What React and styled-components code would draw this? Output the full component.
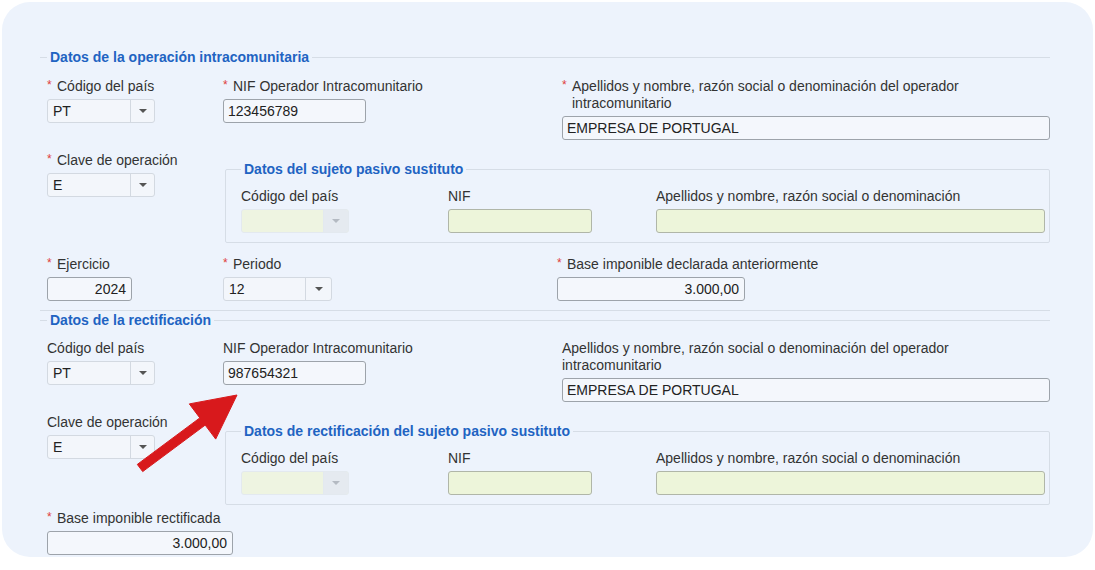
import React from "react";
import styled, { createGlobalStyle } from "styled-components";

const Global = createGlobalStyle`
  html, body { margin: 0; padding: 0; background: #ffffff; }
  body { font-family: "Liberation Sans", Arial, sans-serif; font-size: 14px; color: #333; }
`;

const Card = styled.div`
  position: relative;
  margin: 2px;
  width: 1091px;
  height: 555px;
  box-sizing: border-box;
  background: #edf3fc;
  border-radius: 28px;
  overflow: hidden;
  padding: 47px 43px 0 38px;
`;

const Section = styled.fieldset`
  margin: ${(p) => p.$mt || 0}px 0 0 0;
  min-width: 0;
  padding: 0 0 ${(p) => (p.$bottom ? 9 : 0)}px 7px;
  border: none;
  border-top: 1px solid #d6dde6;
  border-bottom: ${(p) => (p.$bottom ? "1px solid #d6dde6" : "none")};
`;

const Legend = styled.legend`
  padding: 0 3px;
  font-size: 14px;
  line-height: 16px;
  font-weight: bold;
  color: #2163c2;
`;

const Row = styled.div`
  display: flex;
  align-items: flex-start;
  margin-top: ${(p) => p.$mt}px;
`;

const Col = styled.div`
  flex: ${(p) => (p.$w ? `0 0 ${p.$w}px` : "1 1 auto")};
  min-width: 0;
  display: flex;
  flex-direction: column;
  align-items: flex-start;
`;

const Label = styled.div`
  display: flex;
  line-height: 17px;
  font-size: 14px;
  color: #333;
  margin-bottom: 4px;
  text-align: left;
  max-width: ${(p) => (p.$max ? `${p.$max}px` : "none")};
`;

const Req = styled.span`
  flex: 0 0 10px;
  color: #e0403a;
  font-size: 12px;
  line-height: 15px;
`;

const Input = styled.div`
  box-sizing: border-box;
  width: ${(p) => p.$w}px;
  height: 24px;
  border: 1px solid ${(p) => (p.$green ? "#b0b6a8" : "#9da3aa")};
  border-radius: 3px;
  background: ${(p) => (p.$green ? "#edf5da" : "#f4f7fc")};
  padding: 0 5px 0 4px;
  display: flex;
  align-items: center;
  justify-content: ${(p) => (p.$right ? "flex-end" : "flex-start")};
  font-size: 14px;
  color: #222;
`;

const SelectBox = styled.div`
  box-sizing: border-box;
  width: ${(p) => p.$w}px;
  height: 24px;
  border: 1px solid ${(p) => (p.$disabled ? "#e3e9ef" : "#d3d9e1")};
  border-radius: 3px;
  background: ${(p) => (p.$disabled ? "#eef4e1" : "#f3f6fb")};
  display: flex;
  overflow: hidden;
`;

const SelectValue = styled.div`
  flex: 1 1 auto;
  display: flex;
  align-items: center;
  padding-left: 5px;
  font-size: 14px;
  color: #222;
`;

const SelectArrow = styled.div`
  flex: 0 0 ${(p) => p.$aw}px;
  border-left: 1px solid ${(p) => (p.$disabled ? "#e3e9ef" : "#d3d9e1")};
  background: ${(p) => (p.$disabled ? "#e5eaf0" : "transparent")};
  display: flex;
  align-items: center;
  justify-content: center;
  &::after {
    content: "";
    width: 0;
    height: 0;
    border-left: 4px solid transparent;
    border-right: 4px solid transparent;
    border-top: 4px solid ${(p) => (p.$disabled ? "#b4bac2" : "#555")};
  }
`;

const SubFieldset = styled.fieldset`
  flex: 1 1 auto;
  min-width: 0;
  margin: 9px 0 0 0;
  padding: 11px 4px 9px 15px;
  border: 1px solid #d6dde6;
  border-radius: 2px;
`;

const SubRow = styled.div`
  display: grid;
  grid-template-columns: 207px 208px 1fr;
  align-items: start;
`;

const Arrow = styled.svg`
  position: absolute;
  left: 130px;
  top: 388px;
  width: 110px;
  height: 90px;
  pointer-events: none;
`;

function Field({ label, req, w, max, children }) {
  return (
    <Col $w={w}>
      <Label $max={max}>
        {req && <Req>*</Req>}
        <span>{label}</span>
      </Label>
      {children}
    </Col>
  );
}

function Select({ value, w, aw = 23, disabled }) {
  return (
    <SelectBox $w={w} $disabled={disabled}>
      <SelectValue>{value}</SelectValue>
      <SelectArrow $aw={aw} $disabled={disabled} />
    </SelectBox>
  );
}

function SubjectBox({ title }) {
  return (
    <SubFieldset>
      <Legend>{title}</Legend>
      <SubRow>
        <Field label="Código del país">
          <Select w={108} aw={24} disabled />
        </Field>
        <Field label="NIF">
          <Input $w={144} $green />
        </Field>
        <Field label="Apellidos y nombre, razón social o denominación">
          <Input $w={389} $green />
        </Field>
      </SubRow>
    </SubFieldset>
  );
}

const NAME_LABEL = "Apellidos y nombre, razón social o denominación del operador intracomunitario";

export default function App() {
  return (
    <>
      <Global />
      <Card>
        <Section $bottom>
          <Legend>Datos de la operación intracomunitaria</Legend>
          <Row $mt={13}>
            <Field label="Código del país" req w={176}>
              <Select value="PT" w={108} />
            </Field>
            <Field label="NIF Operador Intracomunitario" req w={339}>
              <Input $w={143}>123456789</Input>
            </Field>
            <Field label={NAME_LABEL} req max={450}>
              <Input $w={488}>EMPRESA DE PORTUGAL</Input>
            </Field>
          </Row>
          <Row $mt={12}>
            <Field label="Clave de operación" req w={178}>
              <Select value="E" w={108} />
            </Field>
            <SubjectBox title="Datos del sujeto pasivo sustituto" />
          </Row>
          <Row $mt={13}>
            <Field label="Ejercicio" req w={176}>
              <Input $w={85} $right>2024</Input>
            </Field>
            <Field label="Periodo" req w={334}>
              <Select value="12" w={109} aw={25} />
            </Field>
            <Field label="Base imponible declarada anteriormente" req>
              <Input $w={188} $right>3.000,00</Input>
            </Field>
          </Row>
        </Section>
        <Section $mt={1}>
          <Legend>Datos de la rectificación</Legend>
          <Row $mt={12}>
            <Field label="Código del país" w={176}>
              <Select value="PT" w={108} />
            </Field>
            <Field label="NIF Operador Intracomunitario" w={339}>
              <Input $w={143}>987654321</Input>
            </Field>
            <Field label={NAME_LABEL} max={450}>
              <Input $w={488}>EMPRESA DE PORTUGAL</Input>
            </Field>
          </Row>
          <Row $mt={12}>
            <Field label="Clave de operación" w={178}>
              <Select value="E" w={108} />
            </Field>
            <SubjectBox title="Datos de rectificación del sujeto pasivo sustituto" />
          </Row>
          <Row $mt={5}>
            <Field label="Base imponible rectificada" req>
              <Input $w={186} $right>3.000,00</Input>
            </Field>
          </Row>
        </Section>
        <Arrow viewBox="0 0 110 90">
          <polygon
            points="105,5 83.7,49.1 73.2,35.1 10.7,81.6 5.3,74.4 67.8,27.9 57.3,13.9"
            fill="#d8191c"
            stroke="#d8191c"
            strokeWidth="1"
            strokeLinejoin="round"
          />
        </Arrow>
      </Card>
    </>
  );
}
